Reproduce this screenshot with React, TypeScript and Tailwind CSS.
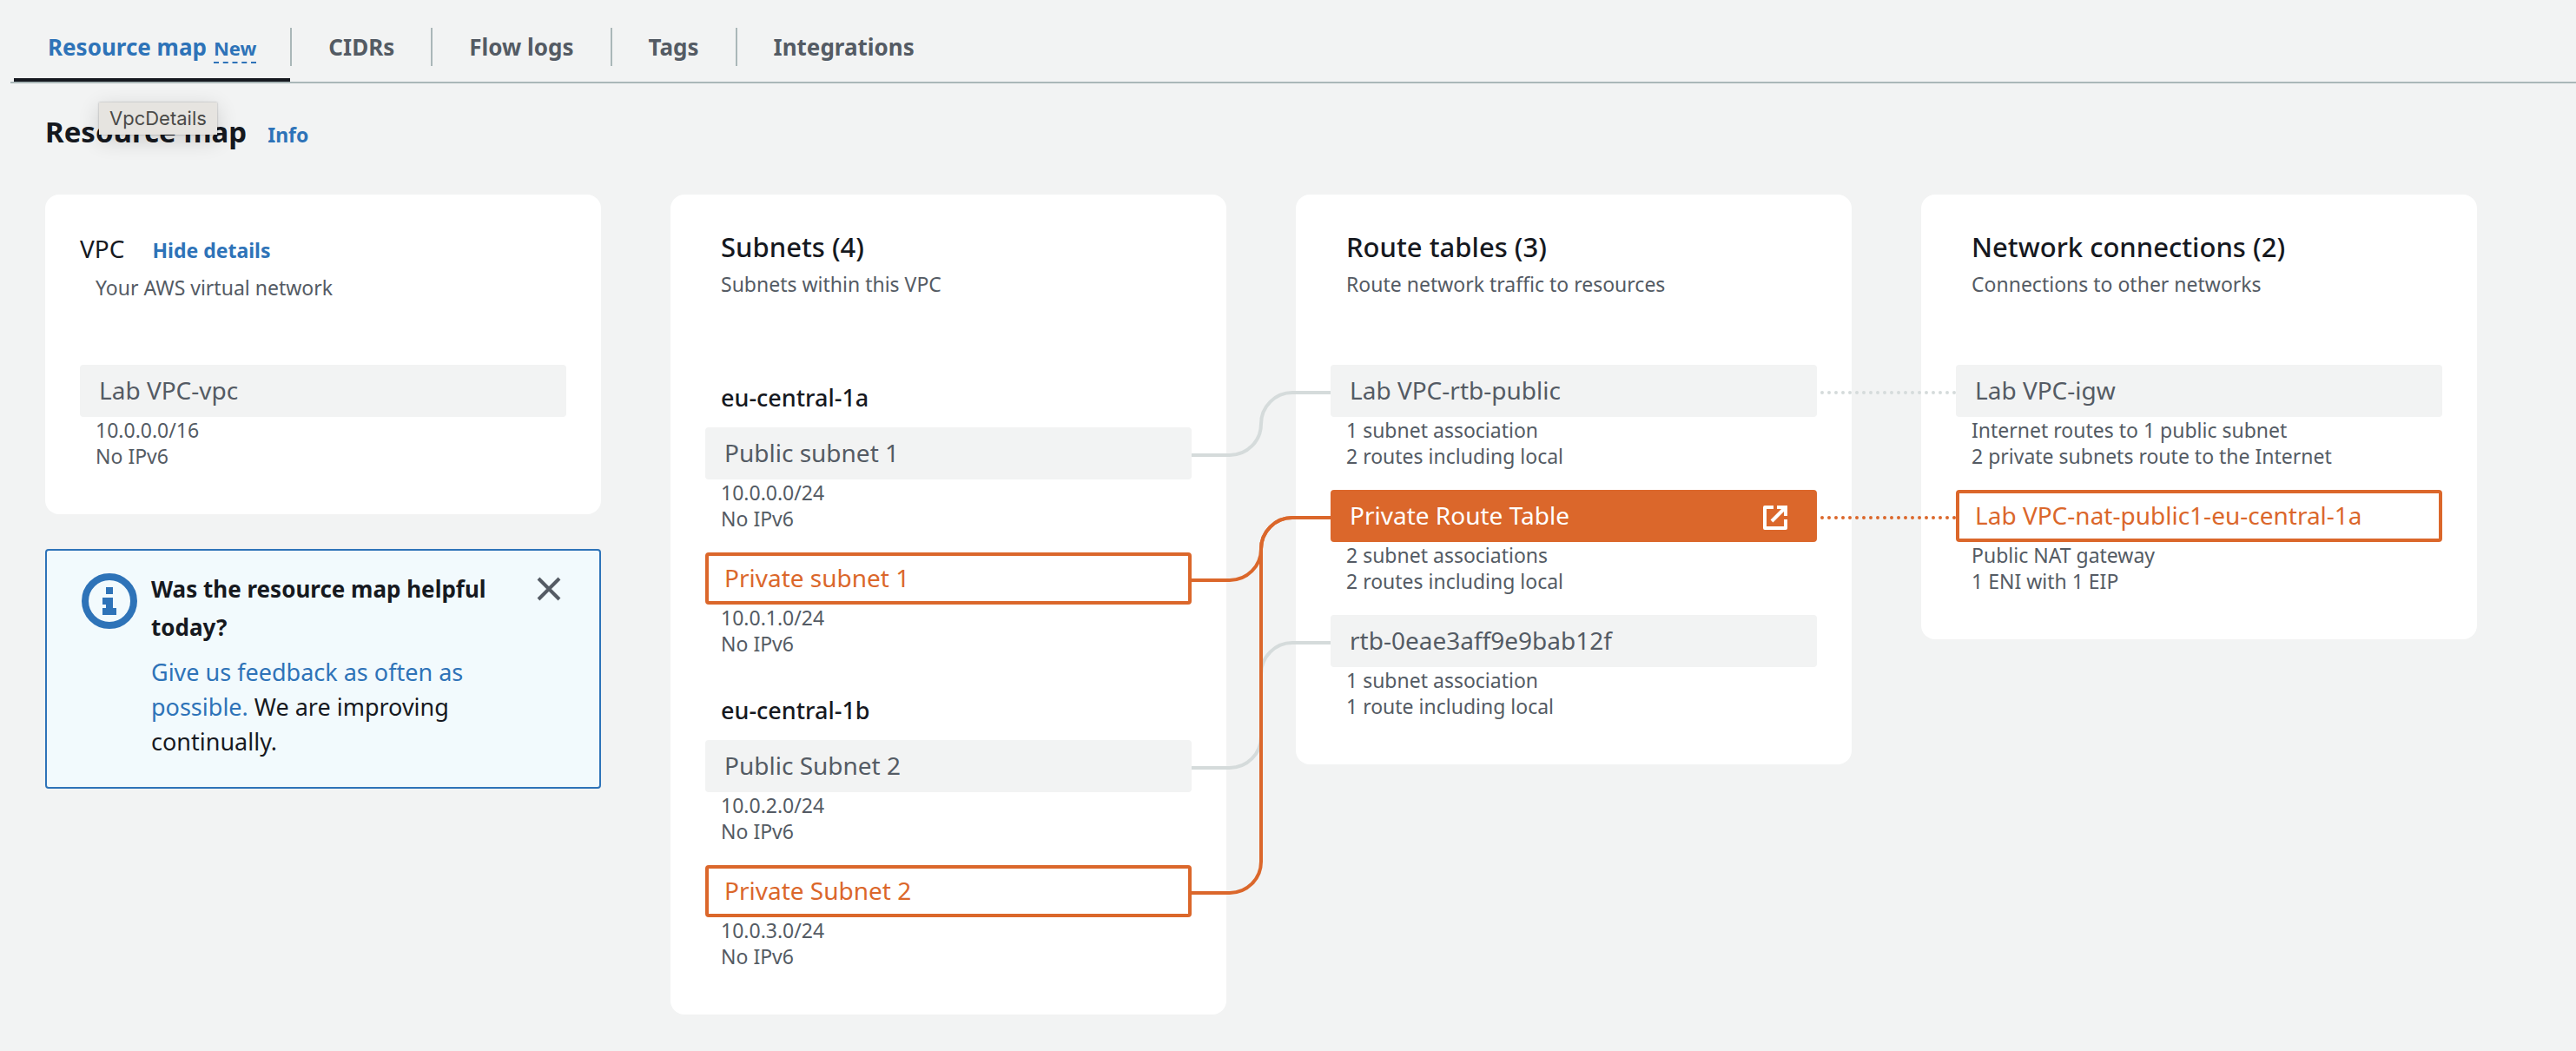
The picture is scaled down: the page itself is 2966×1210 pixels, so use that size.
import { useState } from "react";
import type { ReactNode } from "react";

type Variant = "plain" | "outlined" | "filled";

type ResourceNode = { name: string; details: string[]; variant?: Variant };

const nodeStyles: Record<Variant, string> = {
  plain: "border-[#f2f3f3] bg-[#f2f3f3] text-[#545b64]",
  outlined: "border-[#db672b] bg-white text-[#db672b]",
  filled: "border-[#db672b] bg-[#db672b] text-white",
};

function ExternalIcon() {
  return (
    <svg viewBox="0 0 28 28" className="mt-1 size-7" fill="none" stroke="currentColor" strokeWidth="4" aria-hidden="true">
      <path d="M12 2H2v24h24V16" strokeLinejoin="round" />
      <path d="M16 2h10v10" />
      <path d="M25 3 10 18" />
    </svg>
  );
}

function NodeItem({ name, details, variant = "plain" }: ResourceNode) {
  return (
    <li>
      <button
        type="button"
        className={`flex h-[60px] w-full items-center justify-between rounded-sm border-4 pr-[30px] pl-[18px] text-left text-[28px] leading-9 ${nodeStyles[variant]}`}
      >
        <span className="pb-0.5">{name}</span>
        {variant === "filled" && <ExternalIcon />}
      </button>
      {details.map((line) => (
        <p key={line} className="pl-[18px] text-[23px] leading-[30px] text-[#545b64]">
          {line}
        </p>
      ))}
    </li>
  );
}

function NodeList({ nodes }: { nodes: ResourceNode[] }) {
  return (
    <ul className="flex flex-col gap-6">
      {nodes.map((node) => (
        <NodeItem key={node.name} {...node} />
      ))}
    </ul>
  );
}

function Card({ header, children, connectors }: { header: ReactNode; children: ReactNode; connectors?: ReactNode }) {
  return (
    <section className="relative rounded-2xl bg-white px-10 pb-[52px]">
      <div className="h-[196px] pt-10">{header}</div>
      {children}
      {connectors}
    </section>
  );
}

function CardHeader({ title, subtitle }: { title: string; subtitle: string }) {
  return (
    <div className="pl-[18px]">
      <h3 className="text-[31px] leading-10 font-medium text-[#16191f]">{title}</h3>
      <p className="mt-1 text-[23px] leading-[38px] text-[#545b64]">{subtitle}</p>
    </div>
  );
}

function SubnetConnectors() {
  return (
    <svg
      className="pointer-events-none absolute top-0 -left-[120px] h-[840px] w-40"
      viewBox="0 0 160 840"
      fill="none"
      strokeWidth="4"
      aria-hidden="true"
    >
      <g stroke="#d5dbdb">
        <path d="M0 300H44A36 36 0 0 0 80 264A36 36 0 0 1 116 228H160" />
        <path d="M0 660H44A36 36 0 0 0 80 624V552A36 36 0 0 1 116 516H160" />
      </g>
      <g stroke="#db672b">
        <path d="M0 444H44A36 36 0 0 0 80 408A36 36 0 0 1 116 372H160" />
        <path d="M0 804H44A36 36 0 0 0 80 768V408A36 36 0 0 1 116 372H160" />
      </g>
    </svg>
  );
}

function RouteConnectors() {
  return (
    <svg
      className="pointer-events-none absolute top-0 -left-[120px] h-[400px] w-40"
      viewBox="0 0 160 400"
      fill="none"
      strokeWidth="4"
      strokeLinecap="round"
      strokeDasharray="0 8"
      aria-hidden="true"
    >
      <path d="M6 228H159" stroke="#d5dbdb" />
      <path d="M6 372H159" stroke="#db672b" />
    </svg>
  );
}

const tabs = ["Resource map", "CIDRs", "Flow logs", "Tags", "Integrations"];

function Tabs() {
  const [active, setActive] = useState("Resource map");
  return (
    <div role="tablist" className="ml-3 flex h-24 items-end border-b-2 border-[#aab7b8] pl-1">
      {tabs.map((tab) => (
        <button
          key={tab}
          type="button"
          role="tab"
          aria-selected={tab === active}
          onClick={() => setActive(tab)}
          className={`group flex h-[62px] flex-col justify-between text-[26px] font-bold ${
            tab === active ? "text-[#2e73b8]" : "text-[#545b64]"
          }`}
        >
          <span className="block h-11 border-r-2 border-[#aab7b8] px-[42px] leading-[44px] whitespace-nowrap group-first:px-[39px] group-last:border-transparent">
            {tab}
            {tab === "Resource map" && (
              <span className="ml-2 border-b-2 border-dashed border-[#2e73b8] pb-px text-[22px]">New</span>
            )}
          </span>
          <span className={`mr-0.5 h-1 self-stretch ${tab === active ? "bg-[#16191f]" : ""}`} />
        </button>
      ))}
    </div>
  );
}

function FeedbackAlert() {
  const [open, setOpen] = useState(true);
  if (!open) return null;
  return (
    <aside className="flex items-start rounded-sm border-2 border-[#2e73b8] bg-[#f2fafd] pt-[22px] pr-11 pb-8 pl-10">
      <svg viewBox="0 0 16 16" className="mt-1 size-16 shrink-0" aria-hidden="true">
        <circle cx="8" cy="8" r="7" fill="none" stroke="#2e73b8" strokeWidth="2" />
        <path d="M7 4h2v2H7zM6 7h3v3h1v2H6v-2h1V9H6z" fill="#2e73b8" />
      </svg>
      <div className="ml-4 w-[400px] text-[#16191f]">
        <h4 className="text-[26px] leading-[44px] font-bold">Was the resource map helpful today?</h4>
        <p className="mt-[10px] text-[27px] leading-10">
          <a href="#feedback" className="text-[#2e73b8]">
            Give us feedback as often as possible.
          </a>{" "}
          We are improving continually.
        </p>
      </div>
      <button type="button" aria-label="Dismiss" onClick={() => setOpen(false)} className="mt-2 ml-auto text-[#545b64]">
        <svg viewBox="0 0 28 28" className="size-7" fill="none" stroke="currentColor" strokeWidth="4" aria-hidden="true">
          <path d="m2 2 24 24M26 2 2 26" />
        </svg>
      </button>
    </aside>
  );
}

const zones: { zone: string; subnets: ResourceNode[] }[] = [
  {
    zone: "eu-central-1a",
    subnets: [
      { name: "Public subnet 1", details: ["10.0.0.0/24", "No IPv6"] },
      { name: "Private subnet 1", details: ["10.0.1.0/24", "No IPv6"], variant: "outlined" },
    ],
  },
  {
    zone: "eu-central-1b",
    subnets: [
      { name: "Public Subnet 2", details: ["10.0.2.0/24", "No IPv6"] },
      { name: "Private Subnet 2", details: ["10.0.3.0/24", "No IPv6"], variant: "outlined" },
    ],
  },
];

const routeTables: ResourceNode[] = [
  { name: "Lab VPC-rtb-public", details: ["1 subnet association", "2 routes including local"] },
  { name: "Private Route Table", details: ["2 subnet associations", "2 routes including local"], variant: "filled" },
  { name: "rtb-0eae3aff9e9bab12f", details: ["1 subnet association", "1 route including local"] },
];

const connections: ResourceNode[] = [
  {
    name: "Lab VPC-igw",
    details: ["Internet routes to 1 public subnet", "2 private subnets route to the Internet"],
  },
  {
    name: "Lab VPC-nat-public1-eu-central-1a",
    details: ["Public NAT gateway", "1 ENI with 1 EIP"],
    variant: "outlined",
  },
];

export default function App() {
  return (
    <div className="min-h-screen bg-[#f2f3f3] pb-10 font-['Noto_Sans',sans-serif]">
      <Tabs />
      <main className="pt-8 pr-[114px] pl-[52px]">
        <header className="relative flex items-baseline gap-6">
          <h2 className="text-[33px] leading-[48px] font-bold text-[#16191f]">Resource map</h2>
          <a href="#info" className="text-[23px] font-bold text-[#2e73b8]">
            Info
          </a>
          <div
            role="tooltip"
            className="absolute -top-[10px] left-[62px] bg-[#e6e4e0] px-3 font-[Inter,sans-serif] text-[22px] leading-[37px] text-[#4a4a48] shadow-[0_0_2px_rgba(0,0,0,0.3),0_6px_24px_rgba(0,0,0,0.16)]"
          >
            VpcDetails
          </div>
        </header>

        <div className="mt-12 grid grid-cols-4 items-start gap-20">
          <div className="flex flex-col gap-10">
            <Card
              header={
                <>
                  <div className="flex items-baseline gap-8">
                    <h3 className="text-[28px] leading-[44px] text-[#16191f]">VPC</h3>
                    <button type="button" className="text-[23px] font-bold text-[#2e73b8]">
                      Hide details
                    </button>
                  </div>
                  <p className="mt-1 pl-[18px] text-[23px] leading-[38px] text-[#545b64]">Your AWS virtual network</p>
                </>
              }
            >
              <NodeList nodes={[{ name: "Lab VPC-vpc", details: ["10.0.0.0/16", "No IPv6"] }]} />
            </Card>
            <FeedbackAlert />
          </div>

          <Card header={<CardHeader title="Subnets (4)" subtitle="Subnets within this VPC" />}>
            <div className="flex flex-col gap-6">
              {zones.map(({ zone, subnets }) => (
                <div key={zone}>
                  <h4 className="h-[72px] pt-5 pl-[18px] text-[27px] leading-9 font-medium text-[#16191f]">{zone}</h4>
                  <NodeList nodes={subnets} />
                </div>
              ))}
            </div>
          </Card>

          <Card
            header={<CardHeader title="Route tables (3)" subtitle="Route network traffic to resources" />}
            connectors={<SubnetConnectors />}
          >
            <NodeList nodes={routeTables} />
          </Card>

          <Card
            header={<CardHeader title="Network connections (2)" subtitle="Connections to other networks" />}
            connectors={<RouteConnectors />}
          >
            <NodeList nodes={connections} />
          </Card>
        </div>
      </main>
    </div>
  );
}
